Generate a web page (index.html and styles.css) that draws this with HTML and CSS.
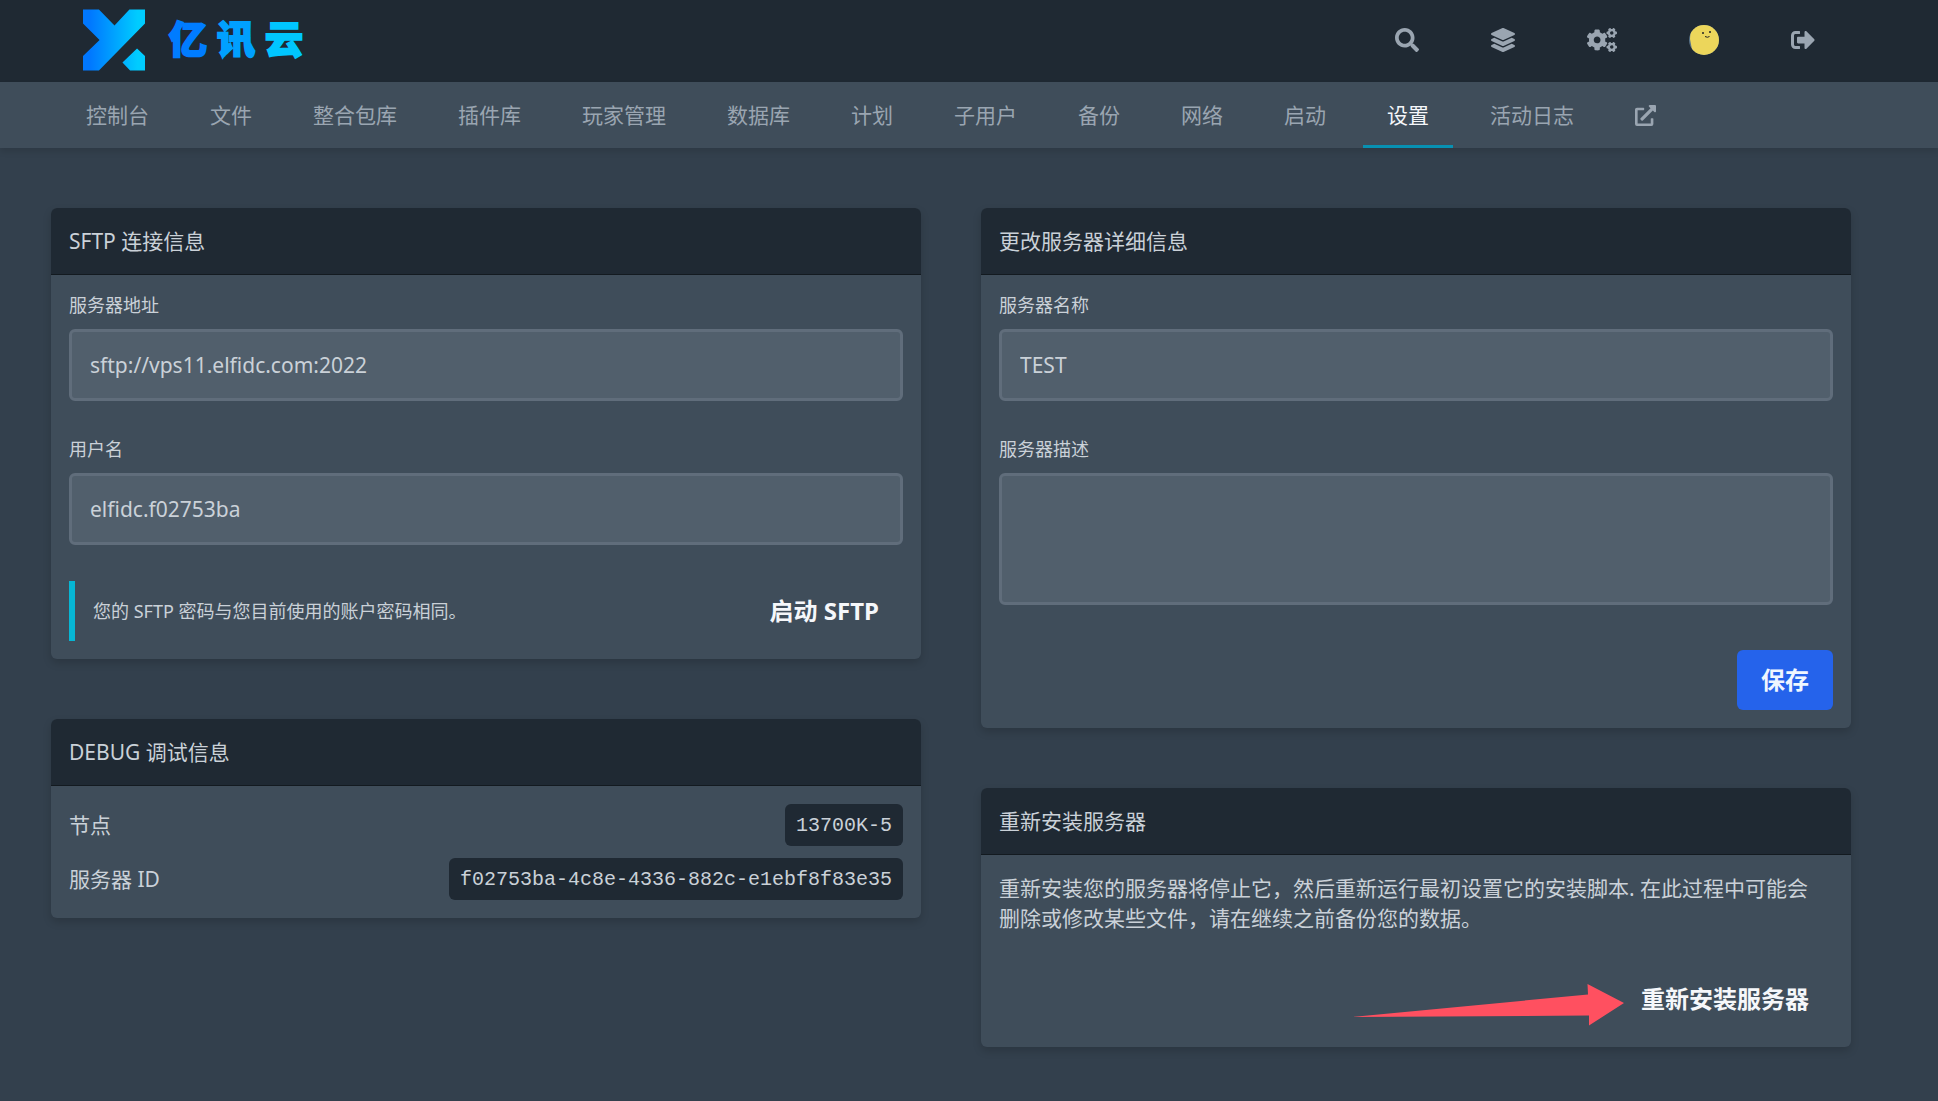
FILE: index.html
```html
<!DOCTYPE html>
<html lang="zh-CN">
<head>
<meta charset="utf-8">
<meta name="viewport" content="width=device-width, initial-scale=1">
<title>亿讯云 - 设置</title>
<link rel="stylesheet" href="styles.css">
</head>
<body>
<header class="topbar">
  <div class="container topbar-inner">
    <a class="brand" href="#" aria-label="亿讯云">
      <svg class="brand-mark" viewBox="0 0 187 184" aria-hidden="true">
        <defs><linearGradient id="mark" gradientUnits="userSpaceOnUse" x1="20" y1="0" x2="165" y2="0"><stop offset="0" stop-color="#07f"/><stop offset="1" stop-color="#0cf"/></linearGradient></defs>
        <path fill="url(#mark)" d="M0 0H48L95 48 140 0H187V42L48 184H0V140L50 92 0 42ZM163 118L187 140V184H142L119 160Z"/>
      </svg>
      <span class="brand-name"><span class="c1">亿</span><span class="c2">讯</span><span class="c3">云</span></span>
    </a>
    <nav class="tools" aria-label="账户">
      <button type="button" class="tool" aria-label="搜索"><svg class="icon" viewBox="0 0 512 512"><path d="M505 442.700L405.300 343c-4.500-4.500-10.600-7-17-7H372c27.600-35.300 44-79.700 44-128C416 93.100 322.900 0 208 0S0 93.100 0 208s93.100 208 208 208c48.300 0 92.700-16.400 128-44v16.300c0 6.400 2.500 12.500 7 17l99.700 99.700c9.400 9.400 24.600 9.400 33.900 0l28.300-28.300c9.400-9.400 9.400-24.600.1-34zM208 336c-70.700 0-128-57.200-128-128 0-70.700 57.200-128 128-128 70.700 0 128 57.200 128 128 0 70.700-57.200 128-128 128z"/></svg></button>
      <a class="tool" href="#" aria-label="服务器"><svg class="icon" viewBox="0 0 512 512"><path d="M12.410 148.020l232.940 105.670c6.800 3.090 14.490 3.090 21.290 0l232.940-105.670c16.550-7.510 16.550-32.520 0-40.030L266.650 2.310a25.607 25.607 0 0 0-21.290 0L12.410 107.980c-16.550 7.510-16.550 32.530 0 40.040zm487.180 88.280l-58.090-26.330-161.640 73.270c-7.560 3.430-15.590 5.170-23.860 5.170s-16.290-1.740-23.860-5.170L70.510 209.970l-58.100 26.330c-16.550 7.500-16.550 32.500 0 40l232.940 105.590c6.800 3.080 14.490 3.080 21.290 0L499.590 276.300c16.550-7.500 16.550-32.500 0-40zm0 127.800l-57.870-26.230-161.860 73.370c-7.560 3.430-15.590 5.170-23.860 5.170s-16.290-1.740-23.860-5.170L70.290 337.870 12.410 364.100c-16.550 7.500-16.550 32.500 0 40l232.940 105.590c6.800 3.080 14.490 3.080 21.290 0L499.590 404.100c16.550-7.500 16.550-32.500 0-40z"/></svg></a>
      <a class="tool" href="#" aria-label="管理"><svg class="icon icon-wide" viewBox="0 0 640 512"><path id="gear" d="M512.100 191l-8.200 14.300c-3 5.300-9.400 7.500-15.100 5.400-11.800-4.400-22.600-10.700-32.100-18.600-4.600-3.800-5.800-10.500-2.800-15.700l8.200-14.300c-6.900-8-12.300-17.300-15.900-27.400h-16.500c-6 0-11.200-4.300-12.200-10.300-2-12-2.100-24.600 0-37.100 1-6 6.200-10.400 12.200-10.400h16.500c3.600-10.100 9-19.400 15.900-27.400l-8.200-14.300c-3-5.200-1.900-11.900 2.800-15.700 9.500-7.900 20.400-14.200 32.100-18.600 5.700-2.100 12.100.1 15.100 5.400l8.200 14.300c10.500-1.900 21.200-1.900 31.700 0L552 6.300c3-5.300 9.400-7.500 15.100-5.400 11.800 4.400 22.600 10.700 32.100 18.600 4.600 3.800 5.800 10.500 2.800 15.700l-8.200 14.300c6.900 8 12.300 17.300 15.900 27.400h16.500c6 0 11.200 4.300 12.200 10.300 2 12 2.100 24.600 0 37.100-1 6-6.200 10.400-12.200 10.400h-16.500c-3.600 10.100-9 19.400-15.900 27.400l8.200 14.300c3 5.200 1.900 11.900-2.800 15.700-9.500 7.900-20.400 14.200-32.100 18.600-5.700 2.100-12.100-.1-15.100-5.400l-8.200-14.300c-10.400 1.900-21.200 1.900-31.700 0zm-10.500-58.800c38.500 29.600 82.400-14.300 52.800-52.800-38.500-29.700-82.400 14.300-52.800 52.800z"/><use href="#gear" y="300"/><path d="M386.300 286.100l33.700 16.800c10.100 5.800 14.500 18.100 10.500 29.100-8.900 24.200-26.400 46.400-42.600 65.800-7.400 8.900-20.200 11.100-30.300 5.300l-29.100-16.800c-16 13.700-34.600 24.600-54.900 31.700v33.600c0 11.600-8.300 21.600-19.700 23.600-24.600 4.200-50.400 4.400-75.900 0-11.500-2-20-11.900-20-23.600V418c-20.300-7.200-38.900-18-54.900-31.700L74 403c-10 5.800-22.900 3.600-30.300-5.300-16.200-19.400-33.300-41.600-42.200-65.700-4-10.900.4-23.200 10.500-29.100l33.300-16.800c-3.900-20.900-3.900-42.400 0-63.400L12 205.800c-10.100-5.800-14.600-18.100-10.500-29 8.900-24.200 26-46.400 42.200-65.800 7.400-8.900 20.200-11.100 30.300-5.300l29.100 16.800c16-13.700 34.600-24.600 54.900-31.700V57.100c0-11.500 8.200-21.500 19.600-23.500 24.600-4.200 50.500-4.400 76-.1 11.500 2 20 11.900 20 23.600v33.600c20.300 7.200 38.900 18 54.900 31.700l29.100-16.800c10-5.800 22.900-3.600 30.300 5.300 16.200 19.400 33.200 41.600 42.100 65.800 4 10.900.1 23.200-10 29.100l-33.700 16.800c3.900 21 3.900 42.500 0 63.500zm-117.600 21.100c59.200-77-28.700-164.900-105.700-105.700-59.200 77 28.700 164.900 105.700 105.700z"/></svg></a>
      <a class="tool" href="#" aria-label="账户"><svg class="avatar" viewBox="0 0 30 30"><defs><clipPath id="round"><circle cx="15" cy="15" r="15"/></clipPath></defs><g clip-path="url(#round)"><path fill="#587289" d="M0 0H30V30H0Z"/><path fill="#ecd65b" d="M2 0H30V30H4L1 14Z"/><circle cx="14" cy="8" r="1" fill="#222"/><circle cx="21" cy="7" r="1" fill="#222"/><path d="M16 11.500q2.500 1.500 4.500 0" fill="none" stroke="#222" stroke-width="1"/></g></svg></a>
      <button type="button" class="tool" aria-label="退出"><svg class="icon" viewBox="0 0 512 512"><path d="M497 273L329 441c-15 15-41 4.500-41-17v-96H152c-13.300 0-24-10.700-24-24v-96c0-13.300 10.700-24 24-24h136V88c0-21.400 25.900-32 41-17l168 168c9.300 9.400 9.300 24.600 0 34zM192 436v-40c0-6.600-5.400-12-12-12H96c-17.700 0-32-14.300-32-32V160c0-17.700 14.300-32 32-32h84c6.600 0 12-5.400 12-12V76c0-6.600-5.400-12-12-12H96c-53 0-96 43-96 96v192c0 53 43 96 96 96h84c6.600 0 12-5.400 12-12z"/></svg></button>
    </nav>
  </div>
</header>
<nav class="subnav" aria-label="服务器">
  <div class="container tabs">
    <a class="tab" href="#">控制台</a>
    <a class="tab" href="#">文件</a>
    <a class="tab" href="#">整合包库</a>
    <a class="tab" href="#">插件库</a>
    <a class="tab" href="#">玩家管理</a>
    <a class="tab" href="#">数据库</a>
    <a class="tab" href="#">计划</a>
    <a class="tab" href="#">子用户</a>
    <a class="tab" href="#">备份</a>
    <a class="tab" href="#">网络</a>
    <a class="tab" href="#">启动</a>
    <a class="tab active" href="#" aria-current="page">设置</a>
    <a class="tab" href="#">活动日志</a>
    <a class="tab" href="#" aria-label="在管理面板中打开"><svg class="icon icon-small" viewBox="0 0 512 512"><path d="M432 320H400a16 16 0 0 0-16 16V448H64V128H208a16 16 0 0 0 16-16V80a16 16 0 0 0-16-16H48A48 48 0 0 0 0 112V464a48 48 0 0 0 48 48H400a48 48 0 0 0 48-48V336A16 16 0 0 0 432 320ZM488 0h-128c-21.370 0-32.050 25.910-17 41l35.730 35.730L135 320.370a24 24 0 0 0 0 34L157.670 377a24 24 0 0 0 34 0L435.280 133.320 471 169c15 15 41 4.500 41-17V24A24 24 0 0 0 488 0Z"/></svg></a>
  </div>
</nav>
<main class="page">
  <div class="container columns">
    <div class="column">
      <section class="card">
        <h2 class="card-title">SFTP 连接信息</h2>
        <div class="card-body">
          <div class="field">
            <label class="label" for="address">服务器地址</label>
            <input class="input" id="address" type="text" value="sftp://vps11.elfidc.com:2022" readonly>
          </div>
          <div class="field">
            <label class="label" for="username">用户名</label>
            <input class="input" id="username" type="text" value="elfidc.f02753ba" readonly>
          </div>
          <div class="sftp-row">
            <p class="notice">您的 SFTP 密码与您目前使用的账户密码相同。</p>
            <a class="button button-text" href="#">启动 SFTP</a>
          </div>
        </div>
      </section>
      <section class="card">
        <h2 class="card-title">DEBUG 调试信息</h2>
        <dl class="card-body facts">
          <div class="fact"><dt>节点</dt><dd class="code">13700K-5</dd></div>
          <div class="fact"><dt>服务器 ID</dt><dd class="code">f02753ba-4c8e-4336-882c-e1ebf8f83e35</dd></div>
        </dl>
      </section>
    </div>
    <div class="column">
      <section class="card">
        <h2 class="card-title">更改服务器详细信息</h2>
        <form class="card-body">
          <div class="field">
            <label class="label" for="name">服务器名称</label>
            <input class="input" id="name" type="text" value="TEST">
          </div>
          <div class="field field-last">
            <label class="label" for="description">服务器描述</label>
            <textarea class="input textarea" id="description"></textarea>
          </div>
          <div class="actions"><button class="button button-primary" type="button">保存</button></div>
        </form>
      </section>
      <section class="card">
        <h2 class="card-title">重新安装服务器</h2>
        <div class="card-body">
          <p class="copy">重新安装您的服务器将停止它，然后重新运行最初设置它的安装脚本. 在此过程中可能会删除或修改某些文件，请在继续之前备份您的数据。</p>
          <div class="actions">
            <span class="pointed">
              <svg class="arrow" viewBox="0 0 272 42" aria-hidden="true"><path fill="#ff5060" d="M0 33L236 10.500 235.500 0 272 19 237 41.500V31.500Z"/></svg>
              <button class="button button-text" type="button">重新安装服务器</button>
            </span>
          </div>
        </div>
      </section>
    </div>
  </div>
</main>
</body>
</html>
```
FILE: styles.css
```css
* { box-sizing: border-box; }

body {
  margin: 0;
  min-height: 100vh;
  background: #33404d;
  color: #cad1d8;
  font-family: "Noto Sans", "Noto Sans CJK SC", sans-serif;
  font-size: 21px;
  line-height: 30px;
}

h2, p, dl, dd { margin: 0; }
a { color: inherit; text-decoration: none; }

.topbar, .subnav, .page { padding-right: 36px; }
.container { max-width: 1800px; margin: 0 auto; }

.topbar { background: #1f2933; }
.topbar-inner {
  display: flex;
  align-items: center;
  justify-content: space-between;
  min-height: 82px;
  padding: 0 36px 2px 32px;
}

.brand { display: flex; align-items: center; gap: 24px; }
.brand-mark { display: block; width: 62px; height: 62px; }
.brand-name {
  display: flex;
  gap: 10px;
  padding-bottom: 6px;
  font-family: "Noto Sans CJK SC", sans-serif;
  font-size: 38px;
  line-height: 48px;
  font-weight: 900;
  -webkit-text-stroke: 2px currentColor;
}
.c1 { color: #007cff; }
.c2 { color: #00a0ff; }
.c3 { color: #00c6ff; }

.tools { display: flex; align-items: center; gap: 72px; }
.tool {
  display: block;
  padding: 0;
  border: 0;
  background: none;
  color: #9aa5b1;
  cursor: pointer;
}
.icon { display: block; width: 24px; height: 24px; fill: currentColor; }
.icon-wide { width: 30px; }
.icon-small { width: 21px; height: 21px; }
.avatar { display: block; width: 30px; height: 30px; }

.subnav {
  background: #3f4d5a;
  box-shadow: 0 4px 6px rgba(0, 0, 0, .1);
}
.tabs { display: flex; gap: 13px; padding-left: 11px; }
.tab {
  display: flex;
  align-items: center;
  height: 66px;
  padding: 0 24px;
  color: #9aa5b1;
  white-space: nowrap;
}
.tab.active { color: #f5f7fa; box-shadow: inset 0 -3px #0891b2; }

.page { padding-top: 60px; padding-bottom: 54px; }
.columns {
  display: grid;
  grid-template-columns: 1fr 1fr;
  align-items: start;
  gap: 60px;
}
.column { display: grid; gap: 60px; min-width: 0; }

.card {
  background: #3f4d5a;
  border-radius: 6px;
  box-shadow: 0 4px 9px rgba(0, 0, 0, .16);
}
.card-title {
  padding: 18px;
  border-bottom: 1px solid #131a20;
  border-radius: 6px 6px 0 0;
  background: #1f2933;
  font-size: 21px;
  font-weight: 400;
}
.card-body { padding: 18px; }

.field { margin-bottom: 36px; }
.field-last { margin-bottom: 45px; }
.label {
  display: block;
  margin-bottom: 12px;
  font-size: 18px;
  line-height: 24px;
}
.input {
  display: block;
  width: 100%;
  height: 72px;
  padding: 0 18px;
  border: 3px solid #606d7b;
  border-radius: 6px;
  outline: 0;
  background: #515f6c;
  color: #cad1d8;
  font: inherit;
}
.textarea { height: 132px; padding: 18px; resize: none; }

.sftp-row { display: flex; align-items: center; justify-content: space-between; }
.notice {
  padding: 15px 0 15px 18px;
  border-left: 6px solid #06b6d4;
  font-size: 18px;
}

.button {
  display: block;
  padding: 15px 24px;
  border: 0;
  border-radius: 6px;
  font-family: inherit;
  font-size: 24px;
  line-height: 30px;
  font-weight: 700;
  white-space: nowrap;
  cursor: pointer;
}
.button-text { background: none; color: #f5f7fa; }
.button-primary { background: #2563eb; color: #eff6ff; }
.actions { display: flex; justify-content: flex-end; }

.facts { display: grid; gap: 12px; }
.fact { display: flex; align-items: center; justify-content: space-between; }
.code {
  padding: 7px 11px 5px;
  border-radius: 6px;
  background: #1f2933;
  font-family: "Liberation Mono", monospace;
  font-size: 20px;
}

.copy { margin-bottom: 36px; padding-right: 12px; }
.pointed { position: relative; }
.arrow {
  position: absolute;
  right: 100%;
  top: 15px;
  width: 272px;
  height: 42px;
  margin-right: -7px;
  pointer-events: none;
}
```
